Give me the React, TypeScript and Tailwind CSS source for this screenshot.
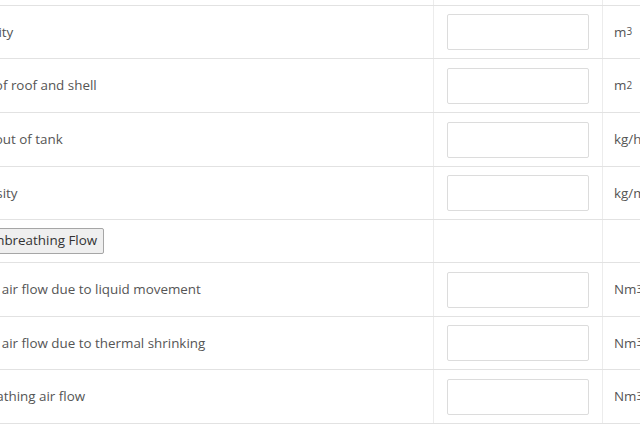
import React from "react";

type Row = {
    label: string;
    unit?: React.ReactNode;
    h: string;
    button?: boolean;
};

const Sup: React.FC<{ children: React.ReactNode }> = ({ children }) => (
    <sup className="text-[10px] relative -top-[1px]">{children}</sup>
);

const rows: Row[] = [
    { label: "Tank capacity", unit: <>m<Sup>3</Sup></>, h: "h-[53px]" },
    { label: "Total area of roof and shell", unit: <>m<Sup>2</Sup></>, h: "h-[54px]" },
    { label: "Max. Flow out of tank", unit: "kg/h", h: "h-[54px]" },
    { label: "Liquid Density", unit: <>kg/m<Sup>3</Sup></>, h: "h-[53px]" },
    { label: "Calculate Inbreathing Flow", button: true, h: "h-[43px]" },
    { label: "Inbreathed air flow due to liquid movement", unit: <>Nm<Sup>3</Sup>/h</>, h: "h-[54px]" },
    { label: "Inbreathed air flow due to thermal shrinking", unit: <>Nm<Sup>3</Sup>/h</>, h: "h-[53px]" },
    { label: "Total inbreathing air flow", unit: <>Nm<Sup>3</Sup>/h</>, h: "h-[54px]" },
];

export default function App() {
    return (
        <div
            className="w-[640px] h-[426px] overflow-hidden bg-white text-[13.4px] text-[#555]"
            style={{ fontFamily: '"Open Sans", sans-serif' }}
        >
            <div className="-ml-[79px] w-[800px]">
                {/* tail of the row above */}
                <div className="flex h-[6px] border-b border-[#e2e2e2]">
                    <div className="w-[513px] border-r border-[#ececec]" />
                    <div className="w-[169px] border-r border-[#ececec]" />
                </div>
                {rows.map((row, index) => (
                    <div
                        key={index}
                        className={`flex items-stretch border-b border-[#e2e2e2] ${row.h}`}
                    >
                        <div className="w-[513px] border-r border-[#ececec] pl-2 flex items-center whitespace-nowrap">
                            {row.button ? (
                                <button className="h-[26px] pl-[2px] pr-[6px] border border-[#a6a6a6] bg-[#efefef] rounded-[2px] text-[13.4px] text-[#333] leading-none">
                                    {row.label}
                                </button>
                            ) : (
                                <span>{row.label}</span>
                            )}
                        </div>
                        <div className="w-[169px] border-r border-[#ececec] px-[13px] flex items-center">
                            {!row.button && (
                                <input
                                    type="text"
                                    className="w-full h-[36px] border border-[#dcdcdc] rounded-[2px] bg-white outline-none"
                                />
                            )}
                        </div>
                        <div className="flex-1 pl-[11px] flex items-center whitespace-nowrap">
                            {row.unit}
                        </div>
                    </div>
                ))}
            </div>
        </div>
    );
}
